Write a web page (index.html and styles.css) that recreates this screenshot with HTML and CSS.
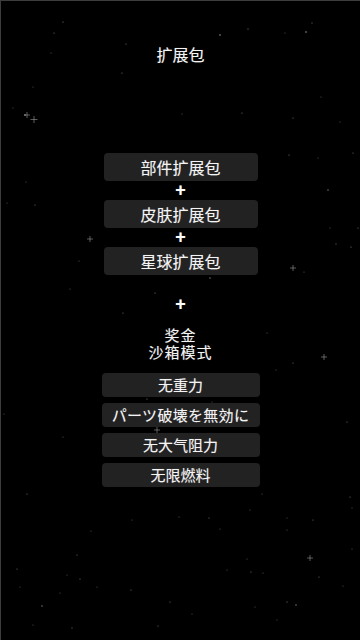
FILE: index.html
```html
<!DOCTYPE html>
<html lang="zh">
<head>
    <meta charset="UTF-8">
    <meta name="viewport" content="width=device-width, initial-scale=1.0">
    <title>扩展包</title>
    <link rel="stylesheet" href="styles.css">
</head>
<body>

    <div class="screen">

        <!-- Star field behind everything -->
        <svg class="stars" width="360" height="640" viewBox="0 0 360 640">
            <g fill="#fff">
                <circle cx="63" cy="22" r="0.6" opacity="0.5"/>
                <circle cx="54" cy="33" r="0.6" opacity="0.45"/>
                <circle cx="220" cy="35" r="0.8" opacity="0.6"/>
                <circle cx="248" cy="29" r="0.6" opacity="0.5"/>
                <circle cx="306" cy="32" r="0.8" opacity="0.6"/>
                <circle cx="312" cy="23" r="0.6" opacity="0.45"/>
                <circle cx="285" cy="33" r="0.5" opacity="0.4"/>
                <circle cx="126" cy="44" r="0.6" opacity="0.45"/>
                <circle cx="51" cy="53" r="0.5" opacity="0.4"/>
                <circle cx="122" cy="73" r="0.6" opacity="0.45"/>
                <circle cx="33" cy="87" r="0.5" opacity="0.4"/>
                <circle cx="25" cy="115" r="0.8" opacity="0.6"/>
                <circle cx="13" cy="108" r="0.5" opacity="0.4"/>
                <circle cx="182" cy="114" r="0.5" opacity="0.4"/>
                <circle cx="242" cy="113" r="0.6" opacity="0.45"/>
                <circle cx="293" cy="118" r="0.6" opacity="0.45"/>
                <circle cx="340" cy="122" r="0.5" opacity="0.4"/>
                <circle cx="321" cy="97" r="0.5" opacity="0.4"/>
                <circle cx="289" cy="155" r="0.6" opacity="0.5"/>
                <circle cx="318" cy="158" r="0.5" opacity="0.4"/>
                <circle cx="353" cy="153" r="0.6" opacity="0.45"/>
                <circle cx="328" cy="190" r="0.7" opacity="0.55"/>
                <circle cx="26" cy="182" r="0.5" opacity="0.4"/>
                <circle cx="35" cy="205" r="0.6" opacity="0.45"/>
                <circle cx="7" cy="203" r="0.5" opacity="0.4"/>
                <circle cx="336" cy="244" r="0.6" opacity="0.45"/>
                <circle cx="351" cy="247" r="0.6" opacity="0.5"/>
                <circle cx="304" cy="272" r="0.5" opacity="0.4"/>
                <circle cx="210" cy="278" r="0.7" opacity="0.55"/>
                <circle cx="155" cy="293" r="0.6" opacity="0.5"/>
                <circle cx="70" cy="289" r="0.5" opacity="0.4"/>
                <circle cx="79" cy="261" r="0.5" opacity="0.4"/>
                <circle cx="123" cy="313" r="0.6" opacity="0.45"/>
                <circle cx="358" cy="228" r="0.6" opacity="0.45"/>
                <circle cx="330" cy="228" r="0.5" opacity="0.4"/>
                <circle cx="267" cy="333" r="0.5" opacity="0.4"/>
                <circle cx="293" cy="363" r="0.6" opacity="0.45"/>
                <circle cx="276" cy="370" r="0.5" opacity="0.4"/>
                <circle cx="147" cy="399" r="0.6" opacity="0.5"/>
                <circle cx="212" cy="402" r="0.5" opacity="0.4"/>
                <circle cx="63" cy="437" r="0.5" opacity="0.4"/>
                <circle cx="347" cy="422" r="0.6" opacity="0.45"/>
                <circle cx="4" cy="414" r="0.5" opacity="0.4"/>
                <circle cx="27" cy="494" r="0.6" opacity="0.45"/>
                <circle cx="262" cy="494" r="0.5" opacity="0.4"/>
                <circle cx="350" cy="497" r="0.6" opacity="0.45"/>
                <circle cx="352" cy="508" r="0.5" opacity="0.4"/>
                <circle cx="287" cy="518" r="0.5" opacity="0.4"/>
                <circle cx="313" cy="520" r="0.6" opacity="0.45"/>
                <circle cx="250" cy="510" r="0.5" opacity="0.4"/>
                <circle cx="179" cy="517" r="0.5" opacity="0.4"/>
                <circle cx="209" cy="518" r="0.6" opacity="0.45"/>
                <circle cx="132" cy="520" r="0.5" opacity="0.4"/>
                <circle cx="287" cy="530" r="0.5" opacity="0.4"/>
                <circle cx="220" cy="529" r="0.5" opacity="0.4"/>
                <circle cx="91" cy="531" r="0.5" opacity="0.4"/>
                <circle cx="77" cy="555" r="0.6" opacity="0.45"/>
                <circle cx="247" cy="559" r="0.5" opacity="0.4"/>
                <circle cx="352" cy="549" r="0.5" opacity="0.4"/>
                <circle cx="17" cy="569" r="0.6" opacity="0.45"/>
                <circle cx="67" cy="575" r="0.5" opacity="0.4"/>
                <circle cx="80" cy="579" r="0.6" opacity="0.45"/>
                <circle cx="227" cy="570" r="0.5" opacity="0.4"/>
                <circle cx="251" cy="572" r="0.6" opacity="0.45"/>
                <circle cx="263" cy="573" r="0.5" opacity="0.4"/>
                <circle cx="319" cy="577" r="0.6" opacity="0.45"/>
                <circle cx="20" cy="587" r="0.5" opacity="0.4"/>
                <circle cx="97" cy="587" r="0.5" opacity="0.4"/>
                <circle cx="131" cy="590" r="0.6" opacity="0.45"/>
                <circle cx="60" cy="593" r="0.5" opacity="0.4"/>
                <circle cx="343" cy="586" r="0.5" opacity="0.4"/>
                <circle cx="42" cy="606" r="0.7" opacity="0.55"/>
                <circle cx="170" cy="602" r="0.6" opacity="0.45"/>
                <circle cx="287" cy="602" r="0.6" opacity="0.5"/>
                <circle cx="296" cy="605" r="0.7" opacity="0.55"/>
                <circle cx="192" cy="614" r="0.5" opacity="0.4"/>
                <circle cx="255" cy="607" r="0.5" opacity="0.4"/>
                <circle cx="72" cy="628" r="0.6" opacity="0.45"/>
                <circle cx="158" cy="626" r="0.6" opacity="0.45"/>
                <circle cx="277" cy="620" r="0.5" opacity="0.4"/>
                <circle cx="33" cy="625" r="0.5" opacity="0.4"/>
            </g>
            <!-- brighter twinkles -->
            <g stroke="#fff" stroke-width="0.6" opacity="0.6">
                <path d="M34 116v7M30.5 119.5h7"/>
                <path d="M90 236v6M87 239h6"/>
                <path d="M293 265v6M290 268h6"/>
                <path d="M324 354v6M321 357h6"/>
                <path d="M157 427v6M154 430h6"/>
                <path d="M27 112v6M24 115h6"/>
                <path d="M310 555v6M307 558h6"/>
            </g>
        </svg>

        <!-- Expansion packs -->
        <h1 class="title">扩展包</h1>

        <div class="packs">
            <div class="pack-button">部件扩展包</div>
            <div class="plus">+</div>
            <div class="pack-button">皮肤扩展包</div>
            <div class="plus">+</div>
            <div class="pack-button">星球扩展包</div>
        </div>

        <div class="plus bonus-plus">+</div>

        <!-- Bonus: sandbox mode -->
        <div class="bonus-title">
            <div class="bonus-line">奖金</div>
            <div class="bonus-line">沙箱模式</div>
        </div>

        <div class="sandbox">
            <div class="sandbox-button">无重力</div>
            <div class="sandbox-button jp">パーツ破壊を無効に</div>
            <div class="sandbox-button">无大气阻力</div>
            <div class="sandbox-button">无限燃料</div>
        </div>

    </div>

</body>
</html>
```

FILE: styles.css
```css
/* Page */
body {
    margin: 0;
    padding: 0;
    background-color: #000;
    font-family: 'Noto Sans CJK SC', 'Noto Sans', sans-serif;
    color: #f4f4f4;
}

.screen {
    position: relative;
    width: 360px;
    height: 640px;
    overflow: hidden;
    box-sizing: border-box;
    border-top: 1px solid #3c3c3c;
    border-left: 1px solid #3c3c3c;
    background-color: #000;
    display: flex;
    flex-direction: column;
    align-items: center;
    text-shadow: 0 0 1px rgba(255, 255, 255, 0.35);
}

.stars {
    position: absolute;
    top: -1px;
    left: -1px;
}

/* Title */
.title {
    position: relative;
    margin: 43px 0 0 0;
    font-size: 16px;
    line-height: 20px;
    font-weight: normal;
}

/* Pack buttons */
.packs {
    position: relative;
    margin-top: 89px;
    display: flex;
    flex-direction: column;
    align-items: center;
}

.pack-button {
    width: 154px;
    height: 28px;
    line-height: 28px;
    background-color: #222;
    border-radius: 4px;
    text-align: center;
    font-size: 16px;
}

.plus {
    position: relative;
    height: 19px;
    line-height: 19px;
    font-family: 'Liberation Sans', sans-serif;
    font-weight: bold;
    font-size: 18px;
    color: #fff;
    text-align: center;
}

.bonus-plus {
    margin-top: 20px;
}

/* Bonus section */
.bonus-title {
    position: relative;
    margin-top: 12px;
    text-align: center;
}

.bonus-line {
    height: 17px;
    line-height: 17px;
    font-size: 15px;
    letter-spacing: 1px;
}

.sandbox {
    position: relative;
    margin-top: 13px;
    display: flex;
    flex-direction: column;
    align-items: center;
    gap: 6px;
}

.sandbox-button {
    width: 158px;
    height: 24px;
    line-height: 24px;
    background-color: #222;
    border-radius: 4px;
    text-align: center;
    font-size: 15px;
}

.sandbox-button.jp {
    font-family: 'Noto Sans CJK JP', sans-serif;
    letter-spacing: 0.3px;
}
```
